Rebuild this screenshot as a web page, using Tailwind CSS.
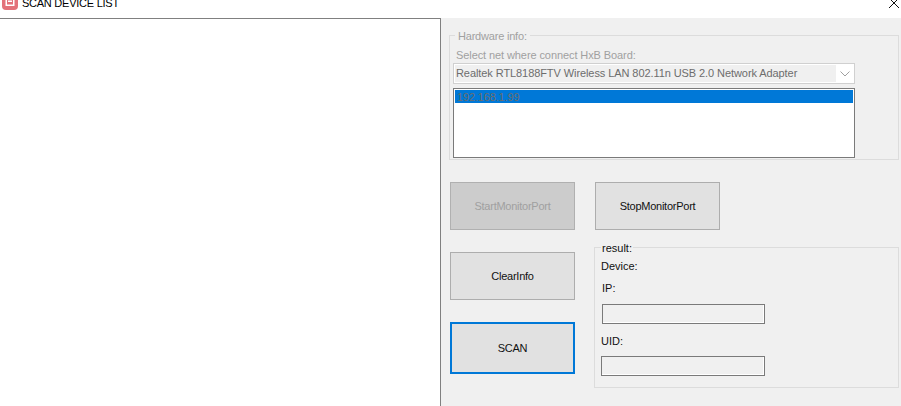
<!DOCTYPE html>
<html lang="en">
<head>
  <meta charset="UTF-8">
  <title>SCAN DEVICE LIST</title>
  <script src="https://cdn.jsdelivr.net/npm/@tailwindcss/browser@4"></script>
</head>
<body class="bg-white overflow-hidden font-['Liberation_Sans',sans-serif] text-[11px] leading-[14px] text-[#111]">
  <div class="w-[901px] h-[406px] flex flex-col overflow-hidden">

    <!-- title bar, cut off by the top of the shot -->
    <header class="h-[18px] flex items-end relative overflow-hidden">
      <svg class="ml-[2px] mb-[8px] w-[16px] h-[16px]" viewBox="0 0 16 16">
        <rect width="16" height="16" rx="4" fill="#e3727a"/>
        <rect x="3.5" y="1" width="9" height="11" fill="#fff"/>
        <rect x="5" y="2" width="6" height="8.5" fill="#e3727a"/>
        <rect x="6" y="6.5" width="4" height="1.5" fill="#fff"/>
      </svg>
      <span class="ml-[4px] mb-[8px] text-[11px] leading-[14px] tracking-[-0.25px] text-black">SCAN DEVICE LIST</span>
      <svg class="absolute right-[2px] top-[-2px] w-[10px] h-[10px]" viewBox="0 0 10 10">
        <path d="M0 0L10 10M10 0L0 10" stroke="#111" stroke-width="1" fill="none"/>
      </svg>
    </header>

    <main class="flex flex-1 min-h-0">
      <div class="w-[440px] bg-white border-t border-[#808080]"></div>

      <div class="flex-1 bg-[#f0f0f0] border-l border-[#808080] pt-[17px] pl-[8px] pr-[2px]">

        <!-- Hardware info -->
        <section class="relative h-[125px] border border-[#dcdcdc] pt-[12px] pl-[3px]">
          <span class="absolute left-[5px] top-[-7px] bg-[#f0f0f0] px-[3px] tracking-[-0.2px] text-[#a0a0a0]">Hardware info:</span>
          <p class="ml-[3px] tracking-[-0.09px] text-[#a0a0a0]">Select net where connect HxB Board:</p>
          <div class="mt-px w-[402px] h-[21px] border border-[#d0d0d0] bg-white p-px flex">
            <div class="w-[381px] bg-[#f0f0f0] pl-[1px] leading-[17px] tracking-[-0.08px] text-[#6d6d6d] whitespace-nowrap">Realtek RTL8188FTV Wireless LAN 802.11n USB 2.0 Network Adapter</div>
            <div class="flex-1 flex items-center justify-center">
              <svg class="w-[10px] h-[6px]" viewBox="0 0 10 6"><path d="M0.5 0.5L5 5L9.5 0.5" stroke="#a0a0a0" fill="none"/></svg>
            </div>
          </div>
          <div class="mt-[4px] w-[402px] h-[70px] border border-[#7a7a7a] bg-white p-px">
            <div class="h-[13px] bg-[#0078d7] pl-[2px] leading-[14px] tracking-[-0.15px] text-[#6d6d6d]">192.168.1.99</div>
          </div>
        </section>

        <!-- buttons + result -->
        <div class="mt-[22px] pl-px flex gap-[19px]">
          <div class="w-[125px] flex flex-col tracking-[-0.25px]">
            <button class="h-[48px] bg-[#cccccc] border border-[#b0b0b0] text-[#a0a0a0]">StartMonitorPort</button>
            <button class="mt-[22px] h-[48px] bg-[#e1e1e1] border border-[#adadad]">ClearInfo</button>
            <button class="mt-[22px] h-[52px] bg-[#e1e1e1] border-2 border-[#0078d7]">SCAN</button>
          </div>

          <div class="flex-1 flex flex-col items-start">
            <button class="ml-px w-[125px] h-[48px] bg-[#e1e1e1] border border-[#adadad] tracking-[-0.25px]">StopMonitorPort</button>
            <section class="relative mt-[17px] w-[305px] h-[141px] border border-[#dcdcdc] pl-[6px] pt-[11px]">
              <span class="absolute left-[6px] top-[-7px] bg-[#f0f0f0] px-px">result:</span>
              <p>Device:</p>
              <p class="mt-[8px] ml-px">IP:</p>
              <div class="mt-[9px] ml-px w-[163px] h-[20px] border border-[#7a7a7a] bg-[#f0f0f0] shadow-[inset_-1px_-1px_0_#fff]"></div>
              <p class="mt-[10px]">UID:</p>
              <div class="mt-[8px] w-[164px] h-[20px] border border-[#7a7a7a] bg-[#f0f0f0] shadow-[inset_-1px_-1px_0_#fff]"></div>
            </section>
          </div>
        </div>
      </div>
    </main>
  </div>
</body>
</html>
